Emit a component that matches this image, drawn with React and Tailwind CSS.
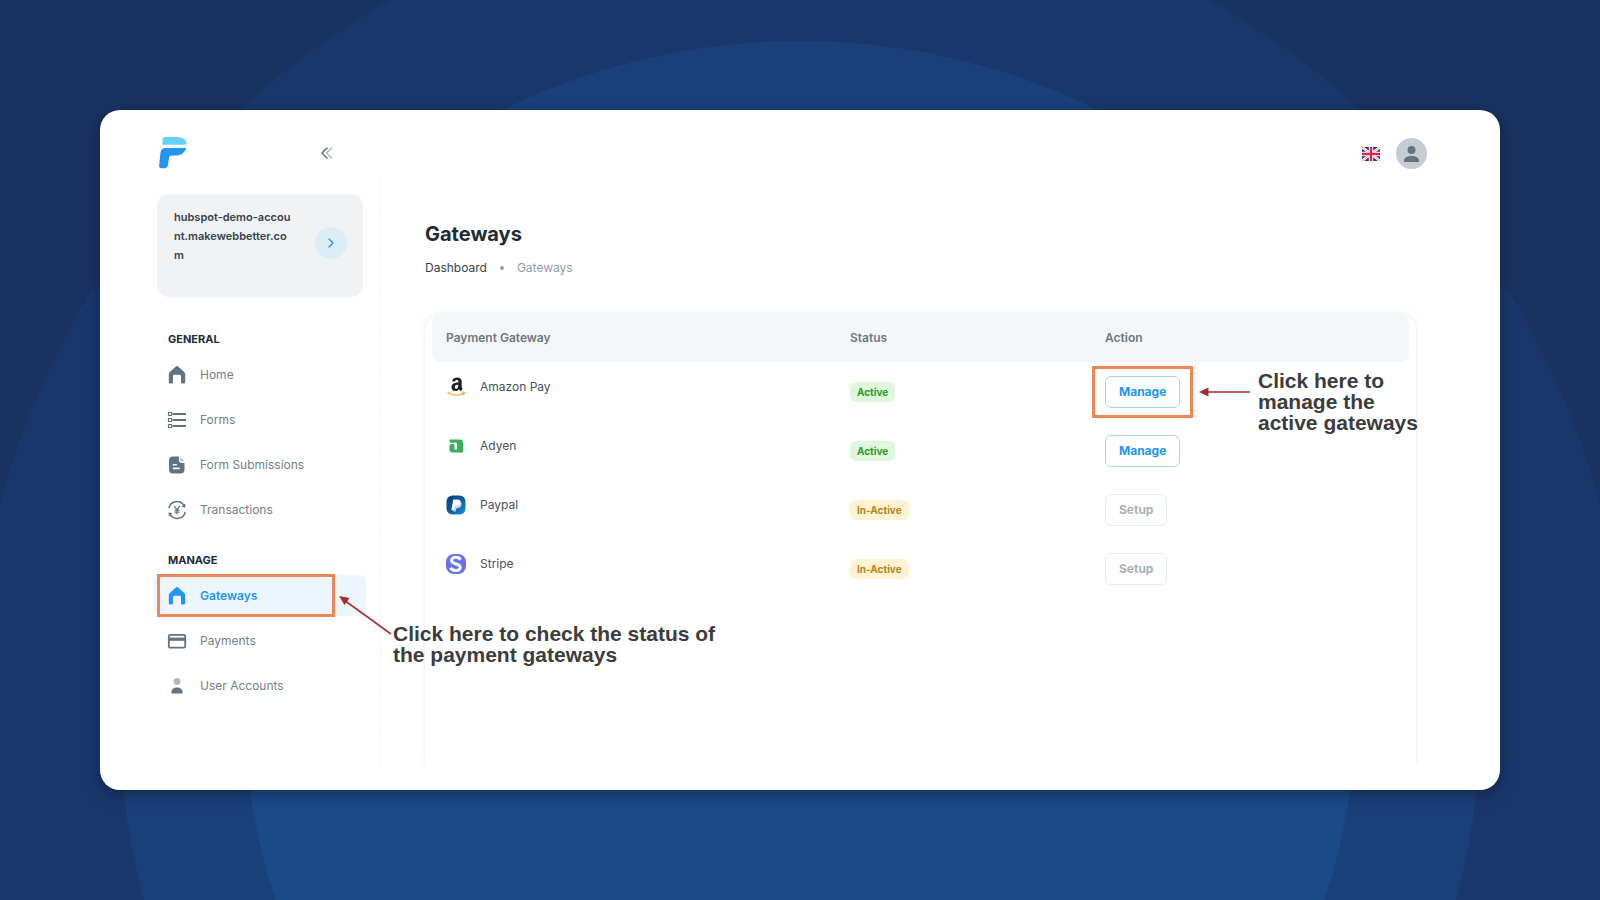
import { ChevronRight } from 'lucide-react';

const general = [
  { label: 'Home', icon: HomeIcon },
  { label: 'Forms', icon: FormsIcon },
  { label: 'Form Submissions', icon: SubmissionsIcon },
  { label: 'Transactions', icon: TransactionsIcon },
];

const manage = [
  { label: 'Gateways', icon: HomeIcon, active: true },
  { label: 'Payments', icon: PaymentsIcon },
  { label: 'User Accounts', icon: UserIcon },
];

const gateways = [
  { name: 'Amazon Pay', logo: AmazonLogo, active: true, note: true },
  { name: 'Adyen', logo: AdyenLogo, active: true },
  { name: 'Paypal', logo: PaypalLogo, active: false },
  { name: 'Stripe', logo: StripeLogo, active: false },
];

function HomeIcon() {
  return (
    <svg width="20" height="20" viewBox="0 0 20 20" fill="currentColor" aria-hidden="true">
      <path d="M10 1c.4 0 .8.2 1.100.5l5.900 5.200c.8.700 1.200 1.600 1.200 2.700v7.500c0 .9-.7 1.600-1.600 1.600h-1.100c-.9 0-1.500-.7-1.500-1.600v-5.700c0-.9-.5-1.500-1.400-1.500H7.400C6.500 9.700 6 10.300 6 11.200v5.700c0 .9-.6 1.600-1.500 1.600H3.400c-.9 0-1.600-.7-1.600-1.600V9.400c0-1.100.4-2 1.200-2.700l5.900-5.200C9.200 1.200 9.600 1 10 1z" />
    </svg>
  );
}

function FormsIcon() {
  return (
    <svg width="20" height="20" viewBox="0 0 20 20" fill="none" stroke="currentColor" aria-hidden="true">
      <path d="M5.500 4H19M5.500 10H19M5.500 16H19" strokeWidth="1.800" />
      <path d="M1.500 2.500h3v3h-3zM1.500 8.500h3v3h-3zM1.500 14.500h3v3h-3z" strokeWidth="1.200" />
    </svg>
  );
}

function SubmissionsIcon() {
  return (
    <svg width="20" height="20" viewBox="0 0 20 20" fill="currentColor" aria-hidden="true">
      <path fillRule="evenodd" d="M6 1.500h6v3.800C12 6.800 13.200 8 14.700 8h2.800v6.500a4 4 0 0 1-4 4H6a4 4 0 0 1-4-4v-9a4 4 0 0 1 4-4zM6.500 9a.8.800 0 0 0 0 1.600h2.800a.8.800 0 0 0 0-1.600zm0 3.600a.8.800 0 0 0 0 1.600h5.600a.8.800 0 0 0 0-1.600z" />
      <path d="M13.200 1.800l4.200 4.700h-3c-.7 0-1.200-.5-1.200-1.200z" opacity=".45" />
    </svg>
  );
}

function TransactionsIcon() {
  return (
    <svg width="20" height="20" viewBox="0 0 20 20" fill="none" stroke="currentColor" strokeWidth="1.500" aria-hidden="true">
      <path d="M1.800 8.200A8.300 8.300 0 0 1 17 5.600M18.200 11.800A8.300 8.300 0 0 1 3 14.400" />
      <path d="M18.300 3.500v4.300l-3.800-1.200zM1.700 16.500v-4.300l3.800 1.200z" fill="currentColor" stroke="none" />
      <path d="M7.200 5.800l2.800 4 2.800-4M10 9.800v4.800M7.500 10.200h5M7.500 12.200h5" strokeWidth="1.200" />
    </svg>
  );
}

function PaymentsIcon() {
  return (
    <svg width="20" height="20" viewBox="0 0 20 20" fill="none" stroke="currentColor" aria-hidden="true">
      <rect x="1.800" y="3.800" width="16.400" height="12.800" rx="1.200" strokeWidth="1.800" />
      <path d="M2 8.200h16" strokeWidth="3.200" />
    </svg>
  );
}

function UserIcon() {
  return (
    <svg width="20" height="20" viewBox="0 0 20 20" fill="currentColor" aria-hidden="true">
      <circle cx="10" cy="5.500" r="3.400" opacity=".5" />
      <path d="M4.400 17.500v-1.200c0-2.900 2.500-4.800 5.600-4.800s5.600 1.900 5.600 4.800v1.200z" />
    </svg>
  );
}

function BrandLogo() {
  return (
    <svg width="28" height="32" viewBox="0 0 28 32" aria-label="Home">
      <path d="M5.500 0h12.300c5.800 0 9.900 2.700 9.800 7.700L3.200 9l.4-6.500C3.700.9 4.300 0 5.500 0z" fill="#63d0fd" />
      <path d="M3 7.700h25v1.500H3z" fill="#fff" />
      <path d="M6.300 11h20.900c-1.500 5-5.400 7.600-10.900 7.600h-3.200c-1.900 0-2.800.8-3 2.500L8.800 28.500c-.3 1.800-1.300 2.700-3 2.700H2.300c-1.700 0-2.400-1-2.200-2.700l1.400-12.900c.4-3 2-4.600 4.800-4.600z" fill="#2196f3" />
    </svg>
  );
}

function AmazonLogo() {
  return (
    <svg width="20" height="20" viewBox="0 0 20 20" fill="none" aria-hidden="true">
      <path fill="#222" d="M15.100 13.900c-.8 0-1.700-.6-2.100-1.700-1 1.300-2.100 1.900-3.700 1.900-2.300 0-3.800-1.500-3.800-3.800 0-3.500 2.900-4.500 6.800-4.700v-.8c0-1.200-.4-1.800-1.500-1.800-1 0-1.600.5-1.800 1.500l-2.900-.3C6.500 1.800 8.500.6 11.200.6c2.800 0 4.500 1.300 4.500 4.100v4.800c0 1 .4 1.500 1 2.300zM12.300 7.700c-2.100.1-3.500.6-3.500 2.400 0 1 .5 1.600 1.300 1.600 1.500 0 2.300-1.400 2.200-4z" />
      <path d="M2 15.500c5 3.300 10.500 3.400 15.200 1.100M16 15.200c1.500-.3 2.300-.2 2.400.1.200.5-.2 1.300-.9 2" stroke="#f5a623" strokeWidth="1.200" strokeLinecap="round" />
    </svg>
  );
}

function AdyenLogo() {
  return (
    <svg width="20" height="20" viewBox="0 0 20 20" fill="none" aria-hidden="true">
      <path d="M3.500 3.500h10.300c2 0 3.200 1.200 3.200 3.200v9.800H6.500c-2 0-3-1-3-2.900v-3.400c0-1.500.8-2.300 2.300-2.300h2.700v5.500h2.600V7.500c0-.5-.3-.8-.8-.8H4.700c-.8 0-1.200-.4-1.200-1.200z" fill="#3aae5c" />
    </svg>
  );
}

function PaypalLogo() {
  return (
    <svg width="20" height="20" viewBox="0 0 20 20" aria-hidden="true">
      <defs>
        <linearGradient id="pp" x1="0" y1="0" x2="1" y2="1">
          <stop offset="0" stopColor="#083a78" />
          <stop offset=".5" stopColor="#0d5a9e" />
          <stop offset="1" stopColor="#1496cf" />
        </linearGradient>
      </defs>
      <rect x=".5" y=".5" width="19" height="19" rx="6" fill="url(#pp)" />
      <path d="M9 6.400h3.800c2.200 0 3.200 1.400 2.700 3.500-.5 2.300-1.900 3.300-4 3.300h-1l-.8 3.400H7.200z" fill="#b9d3ea" />
      <path d="M7.300 4.500h4.500c2.200 0 3.200 1.300 2.700 3.400-.5 2.300-1.900 3.300-4.200 3.300H9.100l-.9 4H5.300z" fill="#fff" />
    </svg>
  );
}

function StripeLogo() {
  return (
    <svg width="20" height="20" viewBox="0 0 20 20" aria-hidden="true">
      <rect width="20" height="20" rx="8" fill="#6772e5" />
      <path d="M14.500 5.600C13.500 4 12 3.300 10 3.300c-2.700 0-4.400 1.200-4.400 3.200 0 4.200 8.600 2.700 8.600 6.500 0 2.200-1.800 3.500-4.500 3.500-2.200 0-4-.8-5.200-2.600" fill="none" stroke="#fff" strokeWidth="3" />
    </svg>
  );
}

function Flag() {
  return (
    <svg width="18" height="14" viewBox="0 0 18 14" aria-label="English">
      <rect width="18" height="14" rx="1" fill="#2a2f8f" />
      <path d="M0 0l18 14M18 0L0 14" stroke="#fff" strokeWidth="2.600" />
      <path d="M0 0l18 14M18 0L0 14" stroke="#e58a9c" strokeWidth=".8" />
      <path d="M9 0v14M0 7h18" stroke="#fff" strokeWidth="4.400" />
      <path d="M9 0v14M0 7h18" stroke="#dc2648" strokeWidth="2.400" />
    </svg>
  );
}

function Backdrop() {
  return (
    <svg className="absolute inset-0 h-full w-full" viewBox="0 0 1600 900" preserveAspectRatio="xMidYMid slice" aria-hidden="true">
      <circle cx="800" cy="721" r="829" fill="#1a376d" />
      <circle cx="800" cy="721" r="680" fill="#1a407a" />
      <circle cx="800" cy="721" r="554" fill="#1a4a88" />
    </svg>
  );
}

function NavItem({ item }) {
  const Icon = item.icon;
  return (
    <li className="relative">
      <a
        href="#"
        className={`flex h-[41px] items-center gap-[13px] rounded-md pl-[13px] text-[12px] ${item.active ? 'bg-[#edf6fe] font-semibold text-[#2196f3]' : 'text-[#74808b]'}`}
      >
        <span className={item.active ? 'text-[#2196f3]' : 'text-[#637381]'}>
          <Icon />
        </span>
        {item.label}
      </a>
      {item.active && (
        <>
          <div className="pointer-events-none absolute top-[-1px] left-[3px] h-[43px] w-[178px] border-3 border-[#ee8658]" />
          <div className="pointer-events-none absolute top-[21px] left-[185px] z-10 flex">
            <svg width="54" height="40" viewBox="0 0 54 40" aria-hidden="true">
              <path d="M5 4l47 34" stroke="#a83236" strokeWidth="1.600" />
              <path d="M0 0l10.500 2L5.500 9z" fill="#a52a2e" />
            </svg>
            <p className="mt-[27px] w-[340px] font-['Liberation_Sans'] text-[21px] leading-[21px] font-bold text-[#3c3c3c]">
              Click here to check the status of the payment gateways
            </p>
          </div>
        </>
      )}
    </li>
  );
}

function NavGroup({ title, items }) {
  return (
    <div>
      <h2 className="mb-[7px] pl-[14px] text-[11px] leading-4 font-bold text-[#212b36] uppercase">{title}</h2>
      <ul className="space-y-1">
        {items.map((item) => (
          <NavItem key={item.label} item={item} />
        ))}
      </ul>
    </div>
  );
}

function ActionButton({ active }) {
  return (
    <button
      type="button"
      className={`h-8 rounded-md border px-[13px] text-[12px] font-bold ${active ? 'border-[#a6d3fa] text-[#2196f3]' : 'border-[#e9ebed] text-[#a9b1b9]'}`}
    >
      {active ? 'Manage' : 'Setup'}
    </button>
  );
}

const App = () => {
  return (
    <div className="relative flex min-h-screen flex-col overflow-hidden bg-[#1a3262] px-[100px] py-[110px] font-['Inter',sans-serif]">
      <Backdrop />
      <div className="relative flex flex-1 flex-col rounded-[20px] bg-white pb-6 shadow-[0_4px_16px_rgba(0,0,0,0.35)]">
        <header className="flex h-[68px] items-end justify-between pr-[73px] pl-[59px]">
          <div className="flex w-[175px] items-center justify-between pb-[9px]">
            <a href="#">
              <BrandLogo />
            </a>
            <button type="button" aria-label="Collapse sidebar">
              <svg width="14" height="14" viewBox="0 0 14 14" fill="none" strokeWidth="1.600" strokeLinecap="round" strokeLinejoin="round">
                <path d="M7 2L2 7l5 5" stroke="#637381" />
                <path d="M11.500 2l-5 5 5 5" stroke="#b4bcc4" />
              </svg>
            </button>
          </div>
          <div className="flex items-center gap-4 pb-[9px]">
            <Flag />
            <button type="button" aria-label="Account" className="rounded-full bg-[#c4cdd5]">
              <svg width="31" height="31" viewBox="0 0 31 31" fill="#637381" aria-hidden="true">
                <circle cx="15.500" cy="12" r="4" />
                <path d="M8 24v-1.800c0-2.700 4.400-4.200 7.500-4.200s7.500 1.500 7.500 4.200V24z" />
              </svg>
            </button>
          </div>
        </header>

        <div className="flex flex-1">
          <aside className="w-[281px] shrink-0 border-r border-dashed border-[#eff1f3] pt-4 pr-[14px] pl-[54px]">
            <div className="mr-[3px] ml-[3px] flex h-[103px] items-center justify-between rounded-xl bg-[#f1f2f4] pr-4 pl-[17px]">
              <p className="w-[121px] self-start pt-[14px] text-[11px] leading-[19px] font-semibold break-all text-[#36414c]">
                hubspot-demo-account.makewebbetter.com
              </p>
              <button type="button" aria-label="Switch account" className="mt-[-6px] flex size-8 items-center justify-center rounded-full bg-[#dcedf8] text-[#2196f3]">
                <ChevronRight size={16} />
              </button>
            </div>
            <nav className="mt-[34px] space-y-[22px]">
              <NavGroup title="General" items={general} />
              <NavGroup title="Manage" items={manage} />
            </nav>
          </aside>

          <main className="flex min-w-0 flex-1 flex-col pr-[84px] pl-[44px]">
            <h1 className="pt-[42px] text-[20px] leading-7 font-bold text-[#212b36]">Gateways</h1>
            <nav aria-label="Breadcrumb" className="mt-2 flex items-center text-[12px] leading-6">
              <a href="#" className="text-[#37424d]">Dashboard</a>
              <span className="mx-[13px] size-1 rounded-full bg-[#919eab]" />
              <span className="text-[#919eab]">Gateways</span>
            </nav>

            <section className="mt-[34px] flex-1 rounded-t-2xl px-[7px] shadow-[0_0_3px_rgba(145,158,171,0.18),0_0_12px_rgba(145,158,171,0.08)] [clip-path:inset(-14px_-14px_0_-14px)]">
              <table className="w-full table-fixed text-left">
                <thead>
                  <tr className="h-12 text-[12px] text-[#6b7885]">
                    <th className="w-[404px] rounded-l-lg bg-[#f4f6f8] pl-[14px] font-semibold">Payment Gateway</th>
                    <th className="w-[255px] bg-[#f4f6f8] pl-[14px] font-semibold">Status</th>
                    <th className="rounded-r-lg bg-[#f4f6f8] pl-[14px] font-semibold">Action</th>
                  </tr>
                </thead>
                <tbody>
                  {gateways.map(({ name, logo: Logo, active, note }) => (
                    <tr key={name} className="h-[59px] text-[12px]">
                      <td className="pb-[10px] pl-[14px]">
                        <div className="flex items-center gap-[14px] text-[#48535e]">
                          <Logo />
                          {name}
                        </div>
                      </td>
                      <td className="pl-[14px]">
                        <span className={`inline-block rounded-md px-[7px] text-[10px] leading-5 font-bold ${active ? 'bg-[#e1f7dd] text-[#2a9d27]' : 'bg-[#fff3d3] text-[#b7841a]'}`}>
                          {active ? 'Active' : 'In-Active'}
                        </span>
                      </td>
                      <td className="pl-[14px]">
                        <div className="relative w-fit">
                          <ActionButton active={active} />
                          {note && (
                            <>
                              <div className="pointer-events-none absolute -inset-x-[13px] -inset-y-[10px] border-3 border-[#ee8658]" />
                              <div className="absolute top-[-6px] left-[94px] flex w-[220px] items-start gap-2">
                                <svg className="mt-[17px] shrink-0" width="51" height="10" viewBox="0 0 51 10" aria-hidden="true">
                                  <path d="M8 5h43" stroke="#a52a2e" strokeWidth="1.600" />
                                  <path d="M0 5l9.500-4.500v9z" fill="#a52a2e" />
                                </svg>
                                <p className="font-['Liberation_Sans'] text-[21px] leading-[21px] font-bold text-[#3c3c3c]">
                                  Click here to
                                  <br />
                                  manage the
                                  <br />
                                  <span className="whitespace-nowrap">active gateways</span>
                                </p>
                              </div>
                            </>
                          )}
                        </div>
                      </td>
                    </tr>
                  ))}
                </tbody>
              </table>
            </section>
          </main>
        </div>
      </div>
    </div>
  );
};

export default App;
